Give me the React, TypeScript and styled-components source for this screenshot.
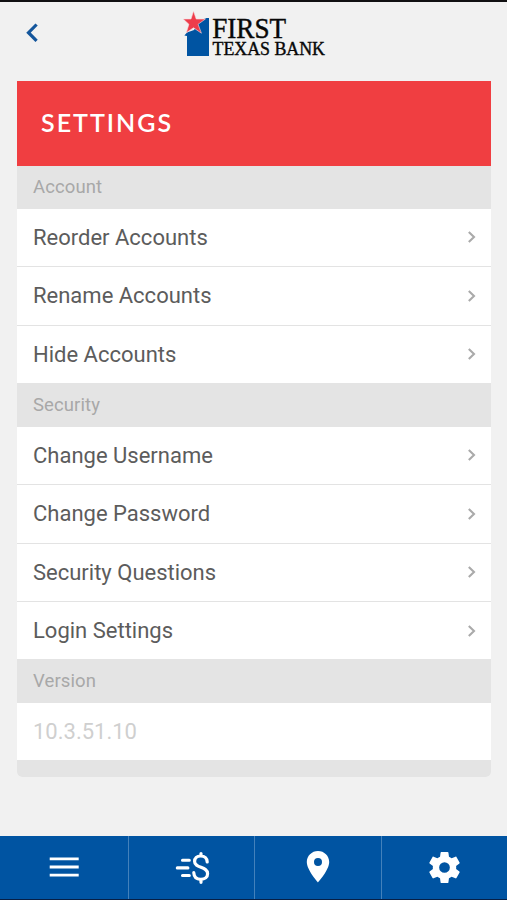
import React from "react";
import styled, { createGlobalStyle } from "styled-components";

const GlobalStyle = createGlobalStyle`
  * { box-sizing: border-box; }
  html, body { margin: 0; padding: 0; background: #f1f1f1; }
  body { font-family: Roboto, "Noto Sans", sans-serif; }
`;

const Screen = styled.div`
  width: 507px;
  height: 900px;
  display: flex;
  flex-direction: column;
  background: #f1f1f1;
  border-top: 2px solid #111012;
  border-bottom: 1px solid #071f45;
  overflow: hidden;
`;

const Header = styled.header`
  flex: none;
  height: 79px;
  display: grid;
  grid-template-columns: 182px 144px 1fr;
`;

const BackButton = styled.button`
  width: 50px;
  height: 60px;
  padding: 20px 0 0 24px;
  border: 0;
  background: none;
  display: flex;
  align-items: flex-start;
`;

const Logo = styled.svg`
  display: block;
  width: 146px;
  height: 60px;
`;

const Card = styled.main`
  flex: none;
  width: 474px;
  margin-left: 17px;
  border-radius: 0 0 5px 5px;
  overflow: hidden;
  background: #fff;
`;

const TitleBar = styled.h1`
  margin: 0;
  height: 85px;
  padding: 0 0 3px 24px;
  display: flex;
  align-items: center;
  background: #f03e41;
  color: #fff;
  font: 600 25px/30px Lato, sans-serif;
  letter-spacing: 2px;
`;

const SectionLabel = styled.h2<{ $height: number }>`
  margin: 0;
  height: ${(p) => p.$height}px;
  padding: 0 16px;
  display: flex;
  align-items: center;
  background: #e4e4e4;
  color: #a8a8a8;
  font-size: 18.5px;
  font-weight: 400;
  letter-spacing: 0.1px;
`;

const Row = styled.div<{ $height: number; $muted?: boolean; $divided?: boolean }>`
  height: ${(p) => p.$height}px;
  padding: 0 14px 0 16px;
  display: flex;
  align-items: center;
  justify-content: space-between;
  border-bottom: ${(p) => (p.$divided ? "1.5px solid #e3e3e3" : "0")};
  color: ${(p) => (p.$muted ? "#cfcfcf" : "#5c5c5c")};
  font-size: 22px;
`;

const CardFoot = styled.div`
  height: 17px;
  background: #e4e4e4;
`;

const TabBar = styled.nav`
  flex: none;
  height: 63px;
  margin-top: auto;
  display: grid;
  grid-template-columns: 129px 126px 127px 125px;
  background: #0054a2;
`;

const Tab = styled.button`
  padding: 0 0 1px;
  border: 0;
  border-right: 1px solid #4381bb;
  background: none;
  display: flex;
  align-items: center;
  justify-content: center;
  &:last-child { border-right: 0; }
`;

const Chevron = () => (
  <svg width="10" height="14" viewBox="0 0 10 14" fill="none" stroke="#aaa" strokeWidth="2.1">
    <path d="M1.8 2 7 7l-5.2 5" />
  </svg>
);

const MenuIcon = () => (
  <svg width="30" height="32" viewBox="0 0 30 32" stroke="#fff" strokeWidth="2.9">
    <path d="M.7 7.9h29M.7 16h29M.7 24.1h29" />
  </svg>
);

const PayIcon = () => (
  <svg width="36" height="36" viewBox="0 0 36 36" fill="none" stroke="#fff" strokeLinecap="round">
    <path strokeWidth="3.1" d="M8.5 11.2h6.8M3.3 18.9h10.6M8.5 26.5h6.8" />
    <path strokeWidth="3.2" d="M33.2 13c-.2-4-2.8-6-6.6-6-3.6 0-6 2.2-6 5.4 0 7.2 13 4.7 13 12.3 0 3.6-2.8 5.6-6.8 5.6-4.2 0-6.8-2.3-7-6.6M27 6.5v-2M27 30.7v2.6" />
  </svg>
);

const PinIcon = () => (
  <svg width="24" height="34" viewBox="0 0 24 34" fill="#fff" fillRule="evenodd">
    <path d="M12 1C5.7 1 .8 5.9.8 12.1.8 20.2 12 32.5 12 32.5s11.2-12.3 11.2-20.4C23.2 5.9 18.3 1 12 1Zm0 7.1a4 4 0 1 1 0 8 4 4 0 0 1 0-8Z" />
  </svg>
);

const GearIcon = () => (
  <svg width="39" height="39" viewBox="0 0 24 24" fill="#fff">
    <path d="M19.14 12.94c.04-.3.06-.61.06-.94 0-.32-.02-.64-.07-.94l2.03-1.58c.18-.14.23-.41.12-.61l-1.92-3.32c-.12-.22-.37-.29-.59-.22l-2.39.96c-.5-.38-1.03-.7-1.62-.94L14.4 2.81c-.04-.24-.24-.41-.48-.41h-3.84c-.24 0-.43.17-.47.41l-.36 2.54c-.59.24-1.13.57-1.62.94l-2.39-.96c-.22-.08-.47 0-.59.22L2.74 8.87c-.12.21-.08.47.12.61l2.03 1.58c-.05.3-.09.63-.09.94s.02.64.07.94l-2.03 1.58c-.18.14-.23.41-.12.61l1.92 3.32c.12.22.37.29.59.22l2.39-.96c.5.38 1.03.7 1.62.94l.36 2.54c.05.24.24.41.48.41h3.84c.24 0 .44-.17.47-.41l.36-2.54c.59-.24 1.13-.56 1.62-.94l2.39.96c.22.08.47 0 .59-.22l1.92-3.32c.12-.22.07-.47-.12-.61l-2.01-1.58ZM12 15.3a3.3 3.3 0 1 1 0-6.6 3.3 3.3 0 0 1 0 6.6Z" />
  </svg>
);

const BankLogo = () => (
  <Logo viewBox="182 2 146 60" role="img" aria-label="First Texas Bank">
    <path fill="#0054a2" d="M187 56V36l-2.6-.4 2.6-3.1L194 30l6-9.5 6.5-2.5h2.5V56Z" />
    <path
      fill="#ee3d4b"
      stroke="#f7dfe3"
      strokeWidth=".6"
      d="m193.5 11 2.7 8h9.2l-7.3 5.3 3.3 8.9-7.9-5.4-7.2 4.9 2.6-8.4-5.7-5.3h7.8Z"
    />
    <g fill="#080808" stroke="#080808" strokeWidth=".4" fontFamily='"Liberation Serif", serif'>
      <text x="212.2" y="38.4" fontSize="28.5" textLength="74" lengthAdjust="spacingAndGlyphs">FIRST</text>
      <text x="212.5" y="55.4" fontSize="18.5" textLength="112.5" lengthAdjust="spacingAndGlyphs">TEXAS BANK</text>
    </g>
  </Logo>
);

const groups = [
  {
    title: "Account",
    height: 42.5,
    items: [
      { label: "Reorder Accounts", height: 58.5 },
      { label: "Rename Accounts", height: 58.5 },
      { label: "Hide Accounts", height: 57 },
    ],
  },
  {
    title: "Security",
    height: 44,
    items: [
      { label: "Change Username", height: 58.5 },
      { label: "Change Password", height: 58.5 },
      { label: "Security Questions", height: 58.5 },
      { label: "Login Settings", height: 57 },
    ],
  },
];

export default function App() {
  return (
    <Screen>
      <GlobalStyle />
      <Header>
        <BackButton aria-label="Back">
          <svg width="16" height="22" viewBox="0 0 16 22" fill="none" stroke="#14569c" strokeWidth="3.2">
            <path d="M12.6 2.5 4.5 10.7l8.1 8.2" />
          </svg>
        </BackButton>
        <BankLogo />
      </Header>
      <Card>
        <TitleBar>SETTINGS</TitleBar>
        {groups.map((group) => (
          <section key={group.title}>
            <SectionLabel $height={group.height}>{group.title}</SectionLabel>
            {group.items.map((item, i) => (
              <Row key={item.label} $height={item.height} $divided={i < group.items.length - 1}>
                {item.label}
                <Chevron />
              </Row>
            ))}
          </section>
        ))}
        <SectionLabel $height={44}>Version</SectionLabel>
        <Row $height={57} $muted>10.3.51.10</Row>
        <CardFoot />
      </Card>
      <TabBar>
        <Tab aria-label="Menu"><MenuIcon /></Tab>
        <Tab aria-label="Payments"><PayIcon /></Tab>
        <Tab aria-label="Locations"><PinIcon /></Tab>
        <Tab aria-label="Settings"><GearIcon /></Tab>
      </TabBar>
    </Screen>
  );
}
